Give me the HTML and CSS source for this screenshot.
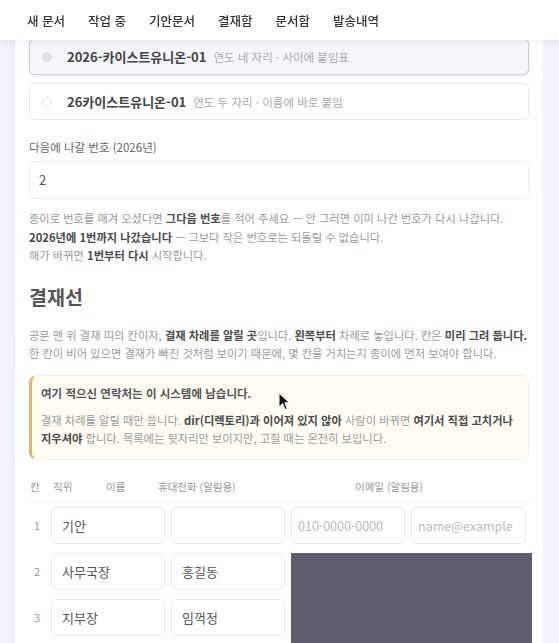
FILE: index.html
```html
<!DOCTYPE html>
<html lang="ko">
<head>
    <meta charset="UTF-8">
    <meta name="viewport" content="width=device-width, initial-scale=1.0">
    <title>문서 설정</title>
    <link rel="stylesheet" href="styles.css">
</head>
<body>
    <div class="topnav">
        <a>새 문서</a>
        <a>작업 중</a>
        <a>기안문서</a>
        <a>결재함</a>
        <a>문서함</a>
        <a>발송내역</a>
    </div>

    <div class="card">
        <label class="option selected">
            <span class="radio on"></span>
            <b>2026-카이스트유니온-01</b>
            <span class="hint">연도 네 자리 · 사이에 붙임표</span>
        </label>
        <label class="option">
            <span class="radio"></span>
            <b>26카이스트유니온-01</b>
            <span class="hint">연도 두 자리 · 이름에 바로 붙임</span>
        </label>

        <div class="field-label">다음에 나갈 번호 (2026년)</div>
        <div class="text-input">2</div>
        <p class="help">
            종이로 번호를 매겨 오셨다면 <b>그다음 번호</b>를 적어 주세요 — 안 그러면 이미 나간 번호가 다시 나갑니다.<br>
            <b>2026년에 1번까지 나갔습니다</b> — 그보다 작은 번호로는 되돌릴 수 없습니다.<br>
            해가 바뀌면 <b>1번부터 다시</b> 시작합니다.
        </p>

        <h2>결재선</h2>
        <p class="help">
            공문 맨 위 결재 띠의 칸이자, <b>결재 차례를 알릴 곳</b>입니다. <b>왼쪽부터</b> 차례로 놓입니다. 칸은 <b>미리 그려 둡니다.</b><br>
            한 칸이 비어 있으면 결재가 빠진 것처럼 보이기 때문에, 몇 칸을 거치는지 종이에 먼저 보여야 합니다.
        </p>

        <div class="notice">
            <div class="notice-title">여기 적으신 연락처는 이 시스템에 남습니다.</div>
            <p>
                결재 차례를 알릴 때만 씁니다. <b>dir(디렉토리)과 이어져 있지 않아</b> 사람이 바뀌면 <b>여기서 직접 고치거나<br>
                지우셔야</b> 합니다. 목록에는 뒷자리만 보이지만, 고칠 때는 온전히 보입니다.
            </p>
        </div>

        <div class="line-head">
            <span class="h-num">칸</span>
            <span class="h-title">직위</span>
            <span class="h-name">이름</span>
            <span class="h-phone">휴대전화 (알림용)</span>
            <span class="h-mail">이메일 (알림용)</span>
        </div>

        <div class="line-rows">
            <div class="line-row">
                <span class="num">1</span>
                <div class="cell">기안</div>
                <div class="cell"></div>
                <div class="cell placeholder">010-0000-0000</div>
                <div class="cell placeholder">name@example</div>
            </div>
            <div class="line-row">
                <span class="num">2</span>
                <div class="cell">사무국장</div>
                <div class="cell">홍길동</div>
                <div class="cell"></div>
                <div class="cell"></div>
            </div>
            <div class="line-row">
                <span class="num">3</span>
                <div class="cell">지부장</div>
                <div class="cell">임꺽정</div>
                <div class="cell"></div>
                <div class="cell"></div>
            </div>
            <div class="dark-pop"></div>
        </div>
    </div>

    <svg class="cursor" width="14" height="20" viewBox="0 0 14 20">
        <path d="M1 1 L1 15 L4.5 11.5 L7 17.5 L9.2 16.6 L6.8 10.8 L11.5 10.8 Z" fill="#111" stroke="#fff" stroke-width="1"/>
    </svg>
</body>
</html>
```

FILE: styles.css
```css
body {
    margin: 0;
    background: #eef2f9;
    font-family: "Noto Sans CJK KR", "Noto Sans", sans-serif;
    color: #555;
    height: 643px;
    overflow: hidden;
}
.topnav {
    position: fixed;
    top: 0;
    left: 0;
    right: 0;
    height: 40px;
    background: #ffffff;
    box-shadow: 0 2px 6px rgba(40, 60, 90, 0.08);
    display: flex;
    align-items: center;
    padding-left: 27px;
    z-index: 5;
}
.topnav a {
    font-size: 12.5px;
    font-weight: 500;
    color: #333;
    margin-right: 23px;
}
.card {
    background: #ffffff;
    margin: 0 16px 0 15px;
    padding: 38px 14px 0 14px;
    min-height: 620px;
}
.option {
    display: flex;
    align-items: center;
    height: 35px;
    border: 1px solid #e6e9ee;
    border-radius: 6px;
    padding-left: 10px;
    margin-bottom: 8px;
    font-size: 11.5px;
}
.option.selected {
    background: #f3f6fb;
    border-color: #c5d0de;
    box-shadow: 0 1px 3px rgba(40, 60, 90, 0.12);
}
.option b {
    font-size: 13px;
    font-weight: 700;
    color: #444;
    margin-right: 7px;
}
.option .hint {
    color: #aaa;
}
.radio {
    width: 8px;
    height: 8px;
    border-radius: 50%;
    border: 1px solid #dcdfe4;
    margin-right: 15px;
    margin-left: 2px;
}
.radio.on {
    background: #dcdfe4;
}
.field-label {
    margin-top: 18px;
    font-size: 11.5px;
    color: #666;
    line-height: 18px;
}
.text-input {
    margin-top: 5px;
    height: 36px;
    border: 1px solid #e8eaee;
    border-radius: 7px;
    padding-left: 9px;
    font-size: 13px;
    line-height: 36px;
    color: #555;
}
.help {
    margin: 10px 0 0;
    font-size: 11.25px;
    line-height: 18.5px;
    color: #9a9a9a;
    word-break: keep-all;
}
.help b {
    color: #4a4a4a;
}
h2 {
    margin: 17px 0 0;
    font-size: 19.5px;
    line-height: 30px;
    color: #555;
    font-weight: 700;
}
h2 + .help {
    margin-top: 14px;
}
.notice {
    margin-top: 12px;
    background: #fffcf3;
    border: 1px solid #f4eedf;
    border-left: 3px solid #e6b56a;
    border-radius: 8px;
    padding: 8px 8px 11px 9px;
}
.notice-title {
    font-size: 11.5px;
    font-weight: 700;
    color: #555;
    line-height: 18px;
}
.notice p {
    margin: 9px 0 0;
    font-size: 11.25px;
    line-height: 18.5px;
    color: #9a9a9a;
    word-break: keep-all;
    white-space: nowrap;
}
.notice p b {
    color: #4a4a4a;
}
.line-head {
    display: flex;
    margin-top: 19px;
    padding-bottom: 6px;
    border-bottom: 1px solid #f0f1f4;
    font-size: 10.5px;
    color: #999;
    line-height: 16px;
}
.h-num { width: 23px; padding-left: 1px; }
.h-title { width: 53px; }
.h-name { width: 52px; }
.h-phone { width: 197px; }
.line-rows {
    position: relative;
    margin-top: 5px;
}
.line-row {
    display: grid;
    grid-template-columns: 16px 114px 114px 114px 115px;
    column-gap: 6px;
    margin-bottom: 9px;
}
.num {
    font-size: 11px;
    color: #999;
    line-height: 37px;
    padding-left: 5px;
}
.cell {
    height: 35px;
    border: 1px solid #e8eaee;
    border-radius: 6px;
    padding-left: 10px;
    font-size: 13px;
    line-height: 35px;
    color: #555;
    white-space: nowrap;
    overflow: hidden;
}
.cell.placeholder {
    color: #bbb;
    font-size: 12.5px;
    padding-left: 6px;
}
.dark-pop {
    position: absolute;
    left: 262px;
    top: 46px;
    width: 241px;
    height: 100px;
    background: #5b606c;
}
.cursor {
    position: absolute;
    left: 278px;
    top: 392px;
    z-index: 6;
}
```
